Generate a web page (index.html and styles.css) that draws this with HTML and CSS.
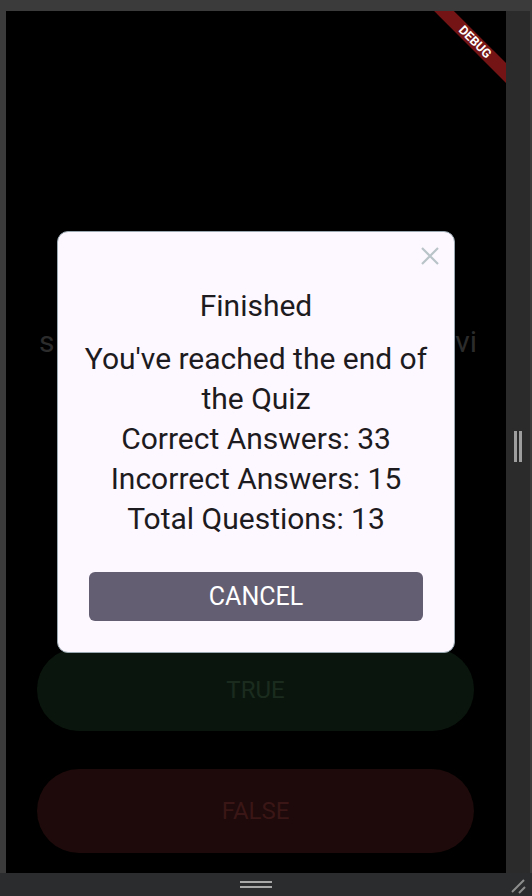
FILE: index.html
```html
<!DOCTYPE html>
<html>
<head>
<meta charset="utf-8">
<link rel="stylesheet" href="styles.css">
</head>
<body>
<div class="window">
  <div class="main">
    <div class="viewport">
      <div class="app">
        <div class="question"><span>s</span><span>vi</span></div>
        <div class="answers">
          <div class="answer answer-true">TRUE</div>
          <div class="answer answer-false">FALSE</div>
        </div>
      </div>
      <div class="scrim">
        <div class="dialog">
          <svg class="close" width="20" height="20" viewBox="0 0 20 20"><path d="M2 2 L18 18 M18 2 L2 18" stroke="#b9c4c9" stroke-width="2.2" fill="none"/></svg>
          <div class="title">Finished</div>
          <div class="body">You've reached the end of the Quiz<br>Correct Answers: 33<br>Incorrect Answers: 15<br>Total Questions: 13</div>
          <div class="cancel">CANCEL</div>
        </div>
      </div>
      <div class="banner">DEBUG</div>
    </div>
    <div class="sidebar"><div class="grip-v"><span></span><span></span></div></div>
  </div>
  <div class="bottombar">
    <div class="bottom-center"><div class="grip-h"><span></span><span></span></div></div>
    <svg class="resize" width="20" height="20" viewBox="0 0 20 20"><path d="M4 16 L16 4 M11 17 L17 11" stroke="#8d8d8d" stroke-width="2" fill="none"/></svg>
  </div>
</div>
</body>
</html>
```
FILE: styles.css
```css
html, body {
  margin: 0;
  padding: 0;
  background: #3b3b3b;
  font-family: Roboto, "Liberation Sans", sans-serif;
}
.window {
  width: 532px;
  height: 896px;
  display: flex;
  flex-direction: column;
  background: #3b3b3b;
  overflow: hidden;
}
.main {
  flex: 1;
  display: flex;
  padding: 11px 2px 0 6px;
  min-height: 0;
}
.viewport {
  width: 500px;
  background: #000;
  position: relative;
  overflow: hidden;
}
.app {
  height: 100%;
  display: flex;
  flex-direction: column;
}
.question {
  margin-top: 311px;
  height: 40px;
  line-height: 40px;
  font-size: 30px;
  color: #2c2c2c;
  display: flex;
  justify-content: space-between;
  padding: 0 29px 0 33px;
}
.answers {
  margin-top: 286px;
  display: flex;
  flex-direction: column;
  gap: 38px;
  padding: 0 32px 0 31px;
}
.answer {
  height: 83px;
  border-radius: 42px;
  display: flex;
  align-items: center;
  justify-content: center;
  font-size: 24px;
}
.answer-true {
  background: #0a160d;
  color: #1b2c1f;
}
.answer-false {
  background: #1e0a0a;
  height: 84px;
  color: #3a1616;
}
.scrim {
  position: absolute;
  inset: 0;
  display: flex;
  align-items: center;
  justify-content: center;
}
.dialog {
  position: relative;
  width: 398px;
  height: 422px;
  box-sizing: border-box;
  background: #fdf7ff;
  border: 1px solid #9aa9b1;
  border-radius: 11px;
  padding: 54px 24px 31px;
  display: flex;
  flex-direction: column;
  align-items: stretch;
  color: #1d1b20;
  text-align: center;
}
.close {
  position: absolute;
  top: 14px;
  right: 14px;
}
.title {
  font-size: 30px;
  line-height: 40px;
}
.body {
  margin-top: 13px;
  font-size: 30px;
  line-height: 40px;
}
.cancel {
  margin: 33px 7px 0;
  height: 49px;
  border-radius: 6px;
  background: #645e73;
  color: #fff;
  font-size: 25px;
  display: flex;
  align-items: center;
  justify-content: center;
}
.banner {
  position: absolute;
  left: 409px;
  top: 24px;
  width: 120px;
  height: 14px;
  line-height: 14px;
  background: #741414;
  color: #fff;
  font-size: 12.5px;
  font-weight: bold;
  text-align: center;
  transform: rotate(45deg);
}
.sidebar {
  width: 24px;
  background: #2b2b2c;
  display: flex;
  align-items: center;
  justify-content: center;
}
.grip-v {
  display: flex;
  gap: 2px;
  margin-top: 8px;
}
.grip-v span {
  width: 3px;
  height: 31px;
  background: #9e9e9e;
}
.bottombar {
  height: 23px;
  background: #2b2c2d;
  display: flex;
  align-items: center;
  position: relative;
}
.bottom-center {
  margin-left: 6px;
  width: 500px;
  display: flex;
  justify-content: center;
}
.grip-h {
  display: flex;
  flex-direction: column;
  gap: 3px;
}
.grip-h span {
  width: 32px;
  height: 2px;
  background: #a8a8a8;
}
.resize {
  margin-left: 2px;
  margin-top: 2px;
}
```
